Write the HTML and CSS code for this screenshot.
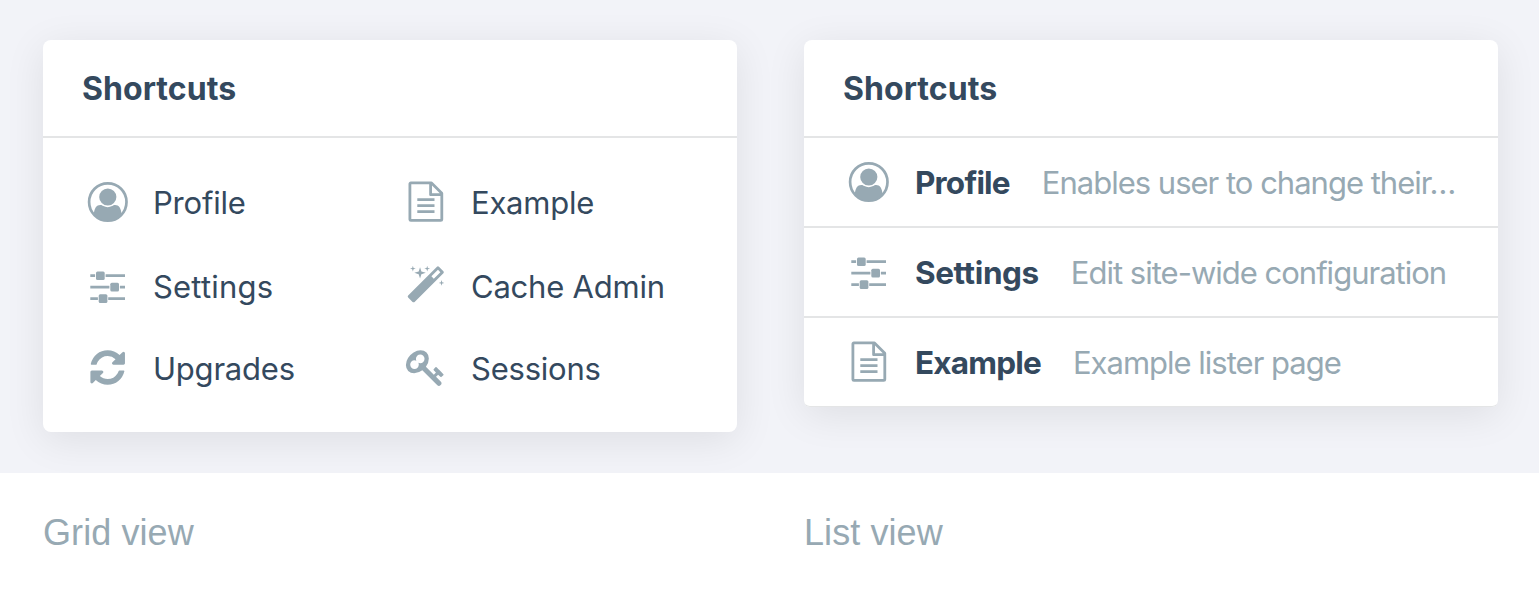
FILE: index.html
```
<!DOCTYPE html>
<html lang="en">
<head>
<meta charset="utf-8">
<title>Shortcuts</title>
<link rel="stylesheet" href="styles.css">
</head>
<body>
<svg class="defs" aria-hidden="true">
  <symbol id="profile" viewBox="0 0 44 44">
    <circle cx="21.800" cy="22" r="18.700" fill="none" stroke="currentColor" stroke-width="2.700"/>
    <circle cx="21.800" cy="17" r="8.6"/>
    <path d="M7.8 34.5C8.3 28 10.5 25 14.3 25c1.3 0 2 .5 3 1.100c2.700 1.500 6.100 1.500 8.800 0c1-.6 1.700-1.100 3-1.100c3.800 0 6 3 6.500 9.500C32 39.400 27 41 21.700 41S11.400 39.400 7.800 34.500z"/>
  </symbol>
  <symbol id="settings" viewBox="0 0 44 44">
    <path d="M4.300 10.300h4.800v2.800H4.300zM19.600 10.300H39v2.800H19.600zM4.300 21.700h19.100v2.800H4.300zM33.900 21.700H39v2.800h-5.100zM4.300 33.200h7.600v2.800H4.300zM22.200 33.200H39v2.800H22.200z"/>
    <rect x="10" y="7.400" width="8.700" height="8.700" rx="1.500"/>
    <rect x="24.300" y="18.800" width="8.700" height="8.700" rx="1.500"/>
    <rect x="12.700" y="30.300" width="8.700" height="8.700" rx="1.500"/>
  </symbol>
  <symbol id="upgrades" viewBox="0 0 44 44">
    <path transform="translate(4.400 4.300) scale(.0225)" d="M1511 928q0 5-1 7-64 268-268 434.500t-478 166.500q-146 0-282.500-55t-243.500-157l-129 129q-19 19-45 19t-45-19-19-45v-448q0-26 19-45t45-19h448q26 0 45 19t19 45-19 45l-137 137q71 66 161 102t187 36q134 0 250-65t186-179q11-17 53-117 8-23 30-23h192q13 0 22.500 9.500t9.500 22.500zm25-800v448q0 26-19 45t-45 19h-448q-26 0-45-19t-19-45 19-45l138-138q-148-137-349-137-134 0-250 65t-186 179q-11 17-53 117-8 23-30 23h-199q-13 0-22.500-9.500t-9.500-22.500v-7q65-268 270-434.500t480-166.500q146 0 284 55.500t245 156.500l130-129q19-19 45-19t45 19 19 45z"/>
  </symbol>
  <symbol id="document" viewBox="0 0 44 44">
    <path fill="none" stroke="currentColor" stroke-width="2.800" stroke-linejoin="round" d="M6.900 2.900H27.500L37.800 13.200V39.400a1 1 0 0 1-1 1H6.900a1 1 0 0 1-1-1V3.900a1 1 0 0 1 1-1zM26.600 3V14.700H37.500"/>
    <path d="M13.300 18.300h17.200v2.700H13.300zM13.300 24.300h17.200v2.700H13.300zM13.300 30.200h17.200v2.700H13.300z"/>
  </symbol>
  <symbol id="magic" viewBox="0 0 44 44">
    <path transform="translate(1.700 1.700) scale(.0224)" d="M1254 581l293-293-107-107-293 293zm447-293q0 27-18 45l-1286 1286q-18 18-45 18t-45-18l-198-198q-18-18-18-45t18-45l1286-1286q18-18 45-18t45 18l198 198q18 18 18 45zm-1351-190l98 30-98 30-30 98-30-98-98-30 98-30 30-98zm350 162l196 60-196 60-60 196-60-196-196-60 196-60 60-196zm930 478l98 30-98 30-30 98-30-98-98-30 98-30 30-98zm-640-640l98 30-98 30-30 98-30-98-98-30 98-30 30-98z"/>
  </symbol>
  <symbol id="key" viewBox="0 0 44 44">
    <path transform="translate(1.900 1.400) scale(.0224)" d="M832 512q0-80-56-136t-136-56-136 56-56 136q0 42 19 83-41-19-83-19-80 0-136 56t-56 136 56 136 136 56 136-56 56-136q0-42-19-83 41 19 83 19 80 0 136-56t56-136zm851 704q0 17-49 66t-66 49q-9 0-28.500-16t-36.500-33-38.500-40-24.500-26l-96 96 220 220q28 28 28 68 0 42-39 81t-81 39q-40 0-68-28l-671-671q-176 131-365 131-163 0-265.500-102.500t-102.500-265.500q0-160 95-313t248-248 313-95q163 0 265.500 102.500t102.500 265.500q0 189-131 365l355 355 96-96q-3-3-26-24.500t-40-38.500-33-36.500-16-28.500q0-17 49-66t66-49q13 0 23 10 6 6 46 44.500t82 79.500 86.500 86 73 78 28.500 41z"/>
  </symbol>
</svg>
<main class="stage">
  <section class="card">
    <h2 class="title">Shortcuts</h2>
    <div class="grid">
      <a class="item"><svg class="icon"><use href="#profile"/></svg><span class="label">Profile</span></a>
      <a class="item"><svg class="icon"><use href="#document"/></svg><span class="label">Example</span></a>
      <a class="item"><svg class="icon"><use href="#settings"/></svg><span class="label label-wide">Settings</span></a>
      <a class="item"><svg class="icon"><use href="#magic"/></svg><span class="label">Cache Admin</span></a>
      <a class="item"><svg class="icon"><use href="#upgrades"/></svg><span class="label">Upgrades</span></a>
      <a class="item"><svg class="icon"><use href="#key"/></svg><span class="label">Sessions</span></a>
    </div>
  </section>
  <section class="card list-card">
    <h2 class="title">Shortcuts</h2>
    <div class="list">
      <a class="row"><svg class="icon"><use href="#profile"/></svg><b class="name">Profile</b><span class="desc">Enables user to change their…</span></a>
      <a class="row"><svg class="icon"><use href="#settings"/></svg><b class="name name-wide">Settings</b><span class="desc">Edit site-wide configuration</span></a>
      <a class="row"><svg class="icon"><use href="#document"/></svg><b class="name">Example</b><span class="desc">Example lister page</span></a>
    </div>
  </section>
</main>
<footer class="captions">
  <p class="caption">Grid view</p>
  <p class="caption">List view</p>
</footer>
</body>
</html>
```
FILE: styles.css
```
* { box-sizing: border-box; }
body {
  margin: 0;
  background: #fff;
  color: #34495e;
  font-family: Inter, "Liberation Sans", sans-serif;
  overflow: hidden;
}
.defs { display: none; }
.stage {
  display: flex;
  align-items: flex-start;
  gap: 67px;
  height: 473px;
  padding: 40px 0 0 43px;
  background: #f2f3f8;
  overflow: hidden;
}
.card {
  flex: none;
  width: 694px;
  height: 392px;
  border-radius: 8px;
  background: #fff;
  box-shadow: 0 8px 40px rgba(0, 0, 0, .085);
}
.list-card { height: 367px; border-radius: 8px 8px 6px 6px; }
.title {
  height: 98px;
  margin: 0;
  padding-left: 39px;
  border-bottom: 2px solid #e4e5e6;
  font-size: 32px;
  font-weight: 700;
  line-height: 97px;
  letter-spacing: .05px;
}
.grid {
  display: grid;
  grid-template-columns: 318px 1fr;
  grid-template-rows: 84px 82px 44px;
  padding: 42px 0 0 43px;
}
.item { display: flex; height: 44px; gap: 23px; }
.icon { width: 44px; height: 44px; flex: none; color: #97a9b3; fill: currentColor; }
.label { font-size: 31px; line-height: 45px; letter-spacing: -.22px; white-space: nowrap; }
.label-wide { letter-spacing: .2px; }
.row {
  display: flex;
  align-items: center;
  height: 90px;
  padding-left: 43px;
  border-bottom: 2px solid #e4e5e6;
  white-space: nowrap;
}
.row:last-child { height: 89px; border-bottom-width: 1px; border-radius: 0 0 6px 6px; }
.name { margin-left: 24px; font-size: 31.500px; font-weight: 700; letter-spacing: -.8px; }
.name-wide { letter-spacing: -.4px; }
.desc { margin-left: 32px; color: #97a9b3; font-size: 31px; letter-spacing: -1px; }
.captions { display: flex; gap: 67px; padding: 34px 0 0 43px; }
.caption {
  flex: none;
  width: 694px;
  margin: 0;
  color: #97a9b3;
  font-family: "Liberation Sans", Arial, sans-serif;
  font-size: 36px;
  line-height: 51px;
  letter-spacing: .08px;
}
```
